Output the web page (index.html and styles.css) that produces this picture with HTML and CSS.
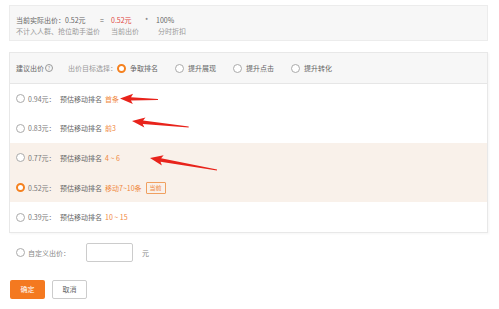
FILE: index.html
```html
<!DOCTYPE html>
<html lang="zh-CN">
<head>
<meta charset="UTF-8" />
<meta name="viewport" content="width=device-width, initial-scale=1" />
<title>出价设置</title>
<link rel="stylesheet" href="styles.css">
</head>
<body>

<!-- 实际出价汇总 -->
<div class="summary">
  <div class="summary-grid">
    <span>当前实际出价：0.52元</span>
    <span class="op">=</span>
    <span class="red">0.52元</span>
    <span class="op">*</span>
    <span>100%</span>
    <span class="muted">不计入人群、抢位助手溢价</span>
    <span></span>
    <span class="muted">当前出价</span>
    <span></span>
    <span class="muted shift">分时折扣</span>
  </div>
</div>

<!-- 建议出价 -->
<div class="suggest">
  <div class="suggest-head">
    <span class="head-title">建议出价<span class="help">?</span></span>
    <span class="muted goal-label">出价目标选择：</span>
    <label class="opt"><i class="radio on"></i>争取排名</label>
    <label class="opt"><i class="radio"></i>提升展现</label>
    <label class="opt"><i class="radio"></i>提升点击</label>
    <label class="opt"><i class="radio"></i>提升转化</label>
  </div>
  <div class="row">
    <i class="radio"></i><span class="price">0.94元：</span>预估移动排名<span class="rank">首条</span>
  </div>
  <div class="row">
    <i class="radio"></i><span class="price">0.83元：</span>预估移动排名<span class="rank">前3</span>
  </div>
  <div class="row hl">
    <i class="radio"></i><span class="price">0.77元：</span>预估移动排名<span class="rank">4 ~ 6</span>
  </div>
  <div class="row hl">
    <i class="radio on"></i><span class="price">0.52元：</span>预估移动排名<span class="rank">移动7~10条</span><span class="tag">当前</span>
  </div>
  <div class="row">
    <i class="radio"></i><span class="price">0.39元：</span>预估移动排名<span class="rank">10 ~ 15</span>
  </div>
</div>

<!-- 自定义出价 -->
<div class="custom">
  <i class="radio"></i><span class="custom-label">自定义出价：</span>
  <input type="text" class="custom-input" />
  <span class="unit">元</span>
</div>

<div class="actions">
  <button class="btn btn-ok">确定</button>
  <button class="btn btn-cancel">取消</button>
</div>

<!-- 标注箭头 -->
<svg class="arrows" width="499" height="309" viewBox="0 0 499 309">
  <g transform="translate(120 98.5) rotate(1.5)">
    <polygon points="0,0 13,-5 11,-1.6 38,-0.4 38,0.6 11,1.8 13,5.2" />
  </g>
  <g transform="translate(132 121) rotate(6)">
    <polygon points="0,0 13,-5 11,-1.6 57,-0.4 57,0.6 11,1.8 13,5.2" />
  </g>
  <g transform="translate(150 158) rotate(10)">
    <polygon points="0,0 13,-5 11,-1.6 68,-0.4 68,0.6 11,1.8 13,5.2" />
  </g>
</svg>

</body>
</html>
```

FILE: styles.css
```css
body {
  margin: 0;
  font-family: "Noto Sans CJK SC", "Noto Sans", sans-serif;
  font-size: 7px;
  color: #666;
  background: #fff;
  width: 499px;
  height: 309px;
  overflow: hidden;
  position: relative;
}
.muted { color: #999; }
.red { color: #e0453f; }

/* 汇总 */
.summary {
  margin: 5px 11px 0 9px;
  height: 36px;
  box-sizing: border-box;
  background: #f7f7f7;
  border: 1px solid #ececec;
  padding: 9px 0 0 6px;
}
.summary-grid {
  display: grid;
  grid-template-columns: 83px 12px 33px 12px auto;
  row-gap: 1px;
  line-height: 10px;
  white-space: nowrap;
}
.summary-grid .op { padding-left: 1px; }
.summary-grid .shift { padding-left: 2px; }

/* 建议出价 */
.suggest {
  margin: 11px 11px 0 9px;
  border: 1px solid #e8e8e8;
  box-shadow: 1px 1px 2px rgba(0, 0, 0, 0.04);
}
.suggest-head {
  height: 30px;
  display: flex;
  align-items: center;
  background: #f7f7f7;
  border-bottom: 1px solid #e6e6e6;
  padding-left: 6px;
}
.head-title { color: #666; display: flex; align-items: center; }
.help {
  display: inline-block;
  width: 6px;
  height: 6px;
  border: 1px solid #999;
  border-radius: 50%;
  font-size: 5px;
  line-height: 6px;
  text-align: center;
  color: #999;
  margin-left: 1px;
}
.goal-label { margin-left: 15px; }
.opt {
  display: flex;
  align-items: center;
  margin-right: 17px;
}
.opt .radio { margin-right: 4px; }

.radio {
  display: inline-block;
  box-sizing: border-box;
  width: 9px;
  height: 9px;
  border: 1px solid #aaa;
  border-radius: 50%;
  background: #fff;
  flex-shrink: 0;
}
.radio.on {
  border: 2.5px solid #f5811f;
}

.row {
  height: 29.6px;
  display: flex;
  align-items: center;
  padding-left: 6px;
}
.row .radio { margin-right: 3px; }
.row.hl { background: #f9f1ea; }
.price { color: #777; width: 32px; }
.rank { color: #f0883e; margin-left: 3px; }
.tag {
  margin-left: 4px;
  border: 1px solid #f0a060;
  color: #f0883e;
  font-size: 6px;
  line-height: 8px;
  padding: 1px 3px;
  border-radius: 1px;
}

/* 自定义 */
.custom {
  display: flex;
  align-items: center;
  margin: 10px 0 0 16px;
  height: 20px;
}
.custom .radio { margin-right: 3px; }
.custom-label { color: #888; width: 58px; }
.custom-input {
  width: 47px;
  height: 19px;
  box-sizing: border-box;
  border: 1px solid #ccc;
  border-radius: 2px;
  padding: 0;
  margin: 0;
}
.unit { margin-left: 9px; color: #888; }

.actions {
  display: flex;
  gap: 7px;
  margin: 17px 0 0 10px;
}
.btn {
  width: 35px;
  height: 19px;
  font-family: inherit;
  font-size: 7px;
  border-radius: 2px;
  padding: 0;
  cursor: pointer;
}
.btn-ok {
  background: #f47920;
  color: #fff;
  border: none;
}
.btn-cancel {
  background: #fff;
  color: #666;
  border: 1px solid #ccc;
}

.arrows {
  position: absolute;
  left: 0;
  top: 0;
  fill: #e8231b;
  pointer-events: none;
}
```
